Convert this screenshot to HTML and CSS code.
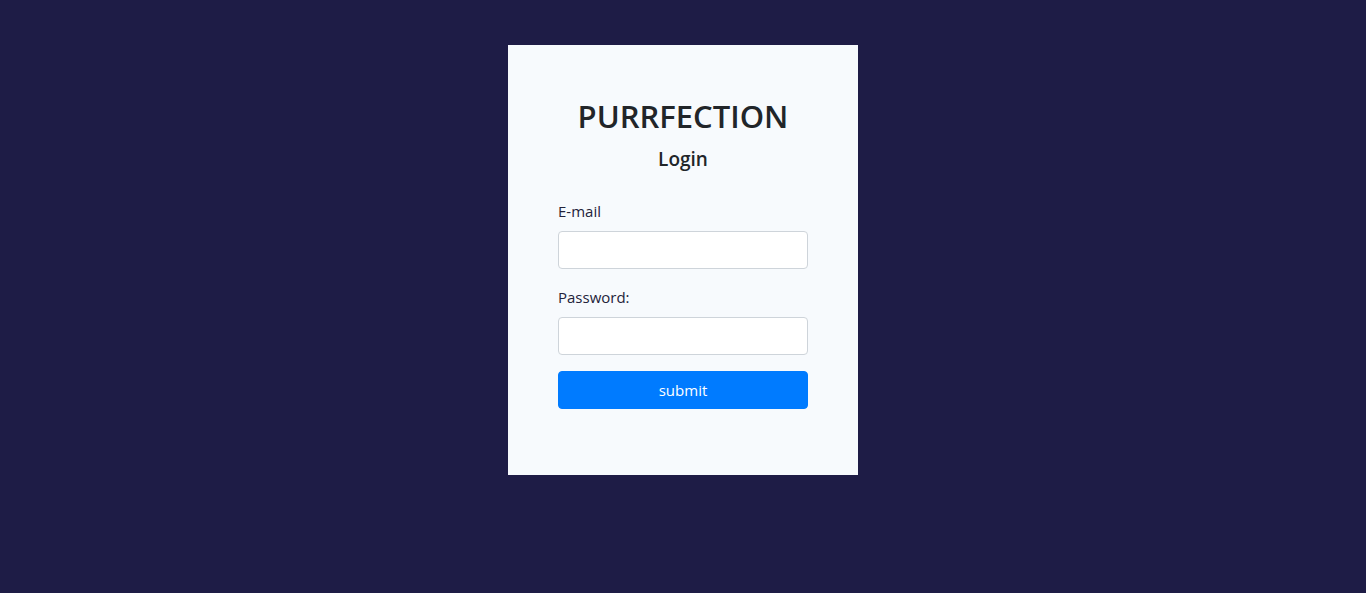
FILE: index.html
```html
<!DOCTYPE html>
<html lang="en">
<head>
<meta charset="utf-8">
<title>Purrfection - Login</title>
<link rel="stylesheet" href="styles.css">
</head>
<body>
<main class="page">
  <section class="card">
    <h1 class="brand">PURRFECTION</h1>
    <h2 class="subtitle">Login</h2>
    <form class="form">
      <div class="group">
        <label class="label" for="email">E-mail</label>
        <input class="input" id="email" type="email">
      </div>
      <div class="group">
        <label class="label" for="password">Password:</label>
        <input class="input" id="password" type="password">
      </div>
      <button class="btn" type="button">submit</button>
    </form>
  </section>
</main>
</body>
</html>
```
FILE: styles.css
```css
* { box-sizing: border-box; }
html, body { margin: 0; padding: 0; }
body {
  background: #1e1c46;
  font-family: "Open Sans", "Noto Sans", sans-serif;
  color: #212529;
  height: 593px;
}
.page {
  display: flex;
  justify-content: center;
  padding-top: 45px;
}
.card {
  width: 350px;
  height: 430px;
  background: #f7fafd;
  padding: 52px 50px 0;
  display: flex;
  flex-direction: column;
}
.brand {
  margin: 0;
  text-align: center;
  font-size: 31px;
  font-weight: 550;
  line-height: 38px;
  color: #212529;
}
.subtitle {
  margin: 12px 0 0;
  text-align: center;
  font-size: 19px;
  font-weight: 600;
  line-height: 24px;
  color: #212529;
}
.form {
  margin-top: 28px;
  display: flex;
  flex-direction: column;
}
.group {
  display: flex;
  flex-direction: column;
  margin-bottom: 16px;
}
.label {
  font-size: 15px;
  line-height: 24px;
  margin-bottom: 8px;
  color: #23233a;
}
.input {
  width: 250px;
  height: 38px;
  border: 1px solid #ced4da;
  border-radius: 4px;
  background: #fff;
}
.btn {
  width: 250px;
  height: 38px;
  border: 1px solid #007bff;
  border-radius: 4px;
  background: #007bff;
  color: #fff;
  font-family: inherit;
  font-size: 15px;
  line-height: 24px;
  padding: 0;
}
```
